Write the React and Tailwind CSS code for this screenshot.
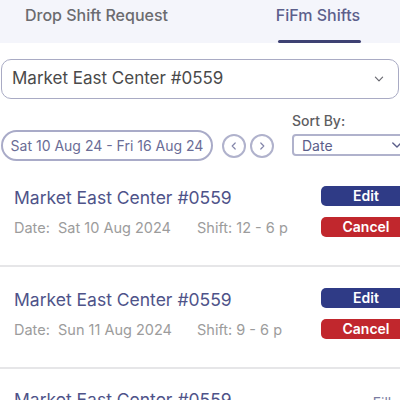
import React from 'react';

const shifts = [
  { date: 'Sat 10 Aug 2024', shift: '12 - 6 p' },
  { date: 'Sun 11 Aug 2024', shift: '9 - 6 p' },
];

function Chevron({ className, dir = 'down' }) {
  const d = {
    down: 'M4 7l6 6 6-6',
    left: 'M12 5l-5 5 5 5',
    right: 'M8 5l5 5-5 5',
  }[dir];
  return (
    <svg viewBox="0 0 20 20" className={className} fill="none" stroke="currentColor" strokeWidth="2" strokeLinecap="round" strokeLinejoin="round">
      <path d={d} />
    </svg>
  );
}

function ShiftCard({ date, shift }) {
  return (
    <div className="flex justify-between pl-[14px] pt-[21px] pb-[27px] border-b-2 border-[#e6e6e8]">
      <div className="flex flex-col">
        <div className="h-[24px] leading-[24px] text-[17.5px] text-[#4e5389] whitespace-nowrap">Market East Center #0559</div>
        <div className="mt-[8px] h-[20px] leading-[20px] text-[14.5px] text-[#9c9c9c] whitespace-nowrap flex">
          <span className="w-[183px]">Date:&nbsp; {date}</span>
          <span>Shift: {shift}</span>
        </div>
      </div>
      <div className="flex flex-col gap-[11px] w-[90px] shrink-0 mr-[-11px]">
        <button className="h-[20px] rounded-[5px] bg-[#2f3b86] text-white text-[14px] font-semibold leading-[20px]">Edit</button>
        <button className="h-[20px] rounded-[5px] bg-[#c1272d] text-white text-[14px] font-semibold leading-[20px]">Cancel</button>
      </div>
    </div>
  );
}

export default function App() {
  return (
    <div className="w-[400px] h-[400px] overflow-hidden bg-white font-['Inter',sans-serif]">
      {/* tabs */}
      <div className="h-[43px] bg-[#f4f5fb] flex">
        <div className="pl-[25px] w-[274px] pt-[3px] text-[16px] font-medium text-[#6b6b6f] whitespace-nowrap">Drop Shift Request</div>
        <div className="flex flex-col items-center w-[88px]">
          <div className="pt-[3px] text-[16px] font-medium text-[#5c5f8c] whitespace-nowrap">FiFm Shifts</div>
          <div className="mt-auto ml-[3px] w-[83px] h-[3px] rounded-full bg-[#3e4173]" />
        </div>
      </div>

      {/* location select */}
      <div className="mt-[16px] mx-[1px] h-[40px] border border-[#a9abc4] rounded-[10px] flex items-center pl-[10px] pr-[13px]">
        <span className="text-[17px] text-[#4a4a4a] flex-1 whitespace-nowrap">Market East Center #0559</span>
        <Chevron className="w-[12px] h-[12px] text-[#6a6a72]" />
      </div>

      {/* filters */}
      <div className="flex items-end mt-[12px] pl-[1px]">
        <div className="h-[31px] w-[212px] shrink-0 border-2 border-[#a9abc8] rounded-full flex items-center justify-center text-[14px] text-[#6a6c96] whitespace-nowrap">
          Sat 10 Aug 24 - Fri 16 Aug 24
        </div>
        <div className="flex shrink-0 gap-[4px] ml-[9px] mb-[3px]">
          <div className="w-[24px] h-[24px] shrink-0 rounded-full border-2 border-[#b0b2cc] flex items-center justify-center">
            <Chevron dir="left" className="w-[12px] h-[12px] text-[#8486aa]" />
          </div>
          <div className="w-[24px] h-[24px] shrink-0 rounded-full border-2 border-[#b0b2cc] flex items-center justify-center">
            <Chevron dir="right" className="w-[12px] h-[12px] text-[#8486aa]" />
          </div>
        </div>
        <div className="ml-[18px] flex flex-col shrink-0 mb-[5px]">
          <span className="text-[14px] font-medium text-[#5e5e62] leading-[20px] mb-[3px]">Sort By:</span>
          <div className="h-[22px] w-[118px] border-2 border-[#b0b2cc] rounded-[4px] flex items-center pl-[8px] pr-[4px]">
            <span className="flex-1 text-[14px] text-[#5b5e8a]">Date</span>
            <Chevron className="w-[14px] h-[14px] text-[#5b5e8a]" />
          </div>
        </div>
      </div>

      {/* list */}
      <div className="mt-[4px]">
        {shifts.map((s) => (
          <ShiftCard key={s.date} {...s} />
        ))}
        <div className="flex justify-between pl-[14px] pt-[19px]">
          <div className="h-[24px] leading-[24px] text-[17.5px] text-[#4e5389] whitespace-nowrap">Market East Center #0559</div>
          <div className="text-[14px] text-[#7a7ca0] pt-[4px] mr-[-8px]">Filled</div>
        </div>
      </div>
    </div>
  );
}
